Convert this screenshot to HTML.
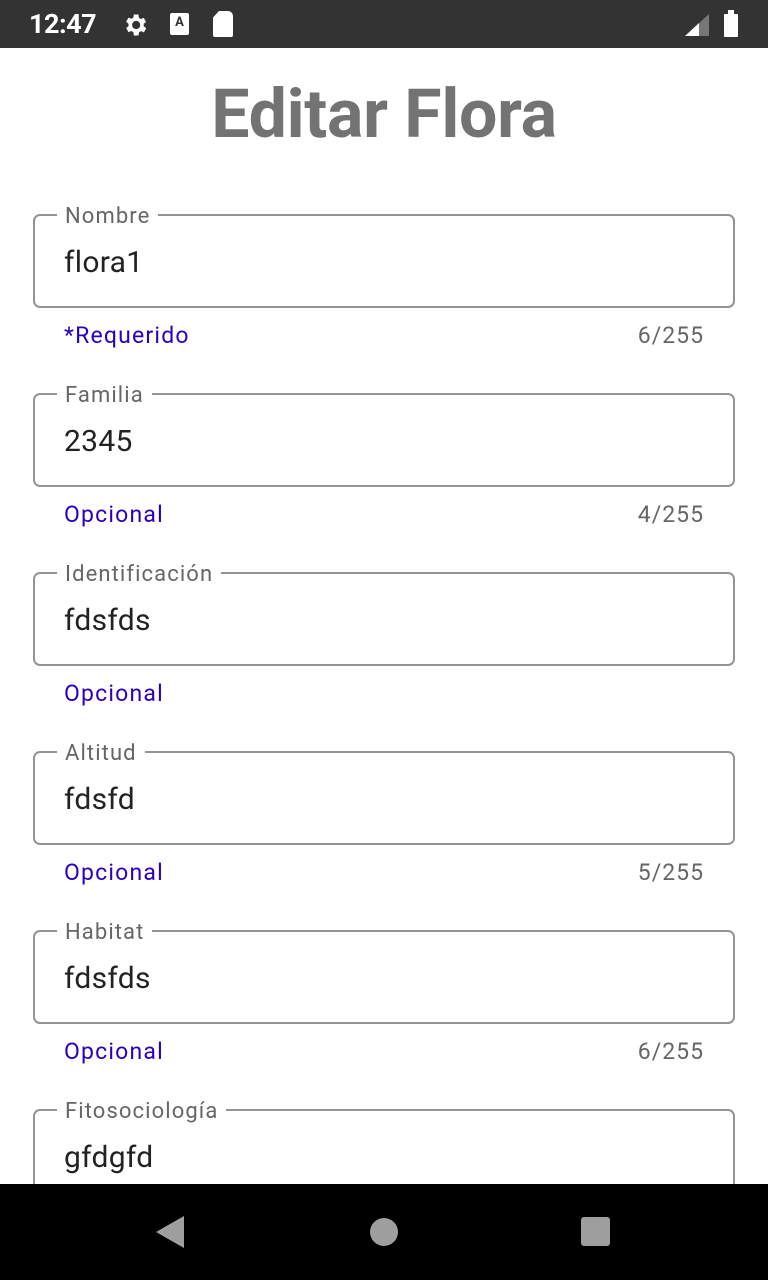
<!DOCTYPE html>
<html><head><style>
body{margin:0;width:768px;height:1280px;background:#fff;position:relative;overflow:hidden;font-family:"Roboto","Liberation Sans",sans-serif}
.sb{position:absolute;top:0;left:0;width:768px;height:48px;background:#333}
.t{position:absolute;left:29px;top:8px;color:#fff;font-size:27px;font-weight:bold;letter-spacing:-0.5px}
h1{position:absolute;top:74px;left:0;width:768px;text-align:center;margin:0;font-size:68px;color:#737373;font-weight:bold;letter-spacing:-0.3px}
.f{position:absolute;left:33px;width:698px;height:90px;border:2px solid #949494;border-radius:7px}
.lb{position:absolute;left:22px;top:-12px;background:#fff;padding:0 8px;color:#666;font-size:22px;letter-spacing:1.1px}
.v{position:absolute;left:29px;top:29px;font-size:30px;color:#222;letter-spacing:0.3px}
.h{position:absolute;left:64px;color:#2a00c0;font-size:23px;letter-spacing:1.2px}
.c{position:absolute;right:64px;color:#666;font-size:23px;letter-spacing:1px}
.nav{position:absolute;top:1184px;left:0;width:768px;height:96px;background:#000}
</style></head><body>
<div class="sb"><span class="t">12:47</span>
<svg style="position:absolute;left:121px;top:11px" width="28" height="28" viewBox="0 0 24 24"><path fill="#fff" d="M19.4 13a7.5 7.5 0 000-2l2.1-1.6-2-3.5-2.5 1a7 7 0 00-1.7-1L15 3h-4l-.4 2.7a7 7 0 00-1.7 1l-2.5-1-2 3.5L6.5 11a7.5 7.5 0 000 2l-2.1 1.6 2 3.5 2.5-1a7 7 0 001.7 1L11 21h4l.4-2.7a7 7 0 001.7-1l2.5 1 2-3.5zM13 15.5A3.5 3.5 0 1113 8.5a3.5 3.5 0 010 7z"/></svg>
<div style="position:absolute;left:170px;top:13px;width:19px;height:22px;background:#fff;border-radius:2px;font-size:13px;font-weight:bold;color:#333;text-align:center;line-height:20px">A</div>
<div style="position:absolute;left:213px;top:11px;width:20px;height:26px;background:#fff;border-radius:2px 5px 2px 2px;clip-path:polygon(30% 0,100% 0,100% 100%,0 100%,0 25%)"></div>
<svg style="position:absolute;left:685px;top:14px" width="24" height="22"><polygon points="0,22 24,0 24,22" fill="#777"/><polygon points="0,22 14,9 14,22" fill="#fff"/></svg>
<div style="position:absolute;left:724px;top:14px;width:14px;height:23px;background:#fff;border-radius:1px"></div>
<div style="position:absolute;left:728px;top:10px;width:6px;height:4px;background:#fff"></div>
</div>
<h1>Editar Flora</h1>

<div class="f" style="top:214px"><span class="lb">Nombre</span><span class="v">flora1</span></div>
<span class="h" style="top:322px">*Requerido</span><span class="c" style="top:322px">6/255</span>

<div class="f" style="top:393px"><span class="lb">Familia</span><span class="v">2345</span></div>
<span class="h" style="top:501px">Opcional</span><span class="c" style="top:501px">4/255</span>

<div class="f" style="top:572px"><span class="lb">Identificación</span><span class="v">fdsfds</span></div>
<span class="h" style="top:680px">Opcional</span>

<div class="f" style="top:751px"><span class="lb">Altitud</span><span class="v">fdsfd</span></div>
<span class="h" style="top:859px">Opcional</span><span class="c" style="top:859px">5/255</span>

<div class="f" style="top:930px"><span class="lb">Habitat</span><span class="v">fdsfds</span></div>
<span class="h" style="top:1038px">Opcional</span><span class="c" style="top:1038px">6/255</span>

<div class="f" style="top:1109px"><span class="lb">Fitosociología</span><span class="v">gfdgfd</span></div>

<div class="nav">
<svg style="position:absolute;left:156px;top:32px" width="28" height="32"><polygon points="28,0 28,32 0,16" fill="#9e9e9e"/></svg>
<div style="position:absolute;left:370px;top:34px;width:28px;height:28px;border-radius:50%;background:#9e9e9e"></div>
<div style="position:absolute;left:581px;top:33px;width:29px;height:29px;border-radius:3px;background:#9e9e9e"></div>
</div>
</body></html>
